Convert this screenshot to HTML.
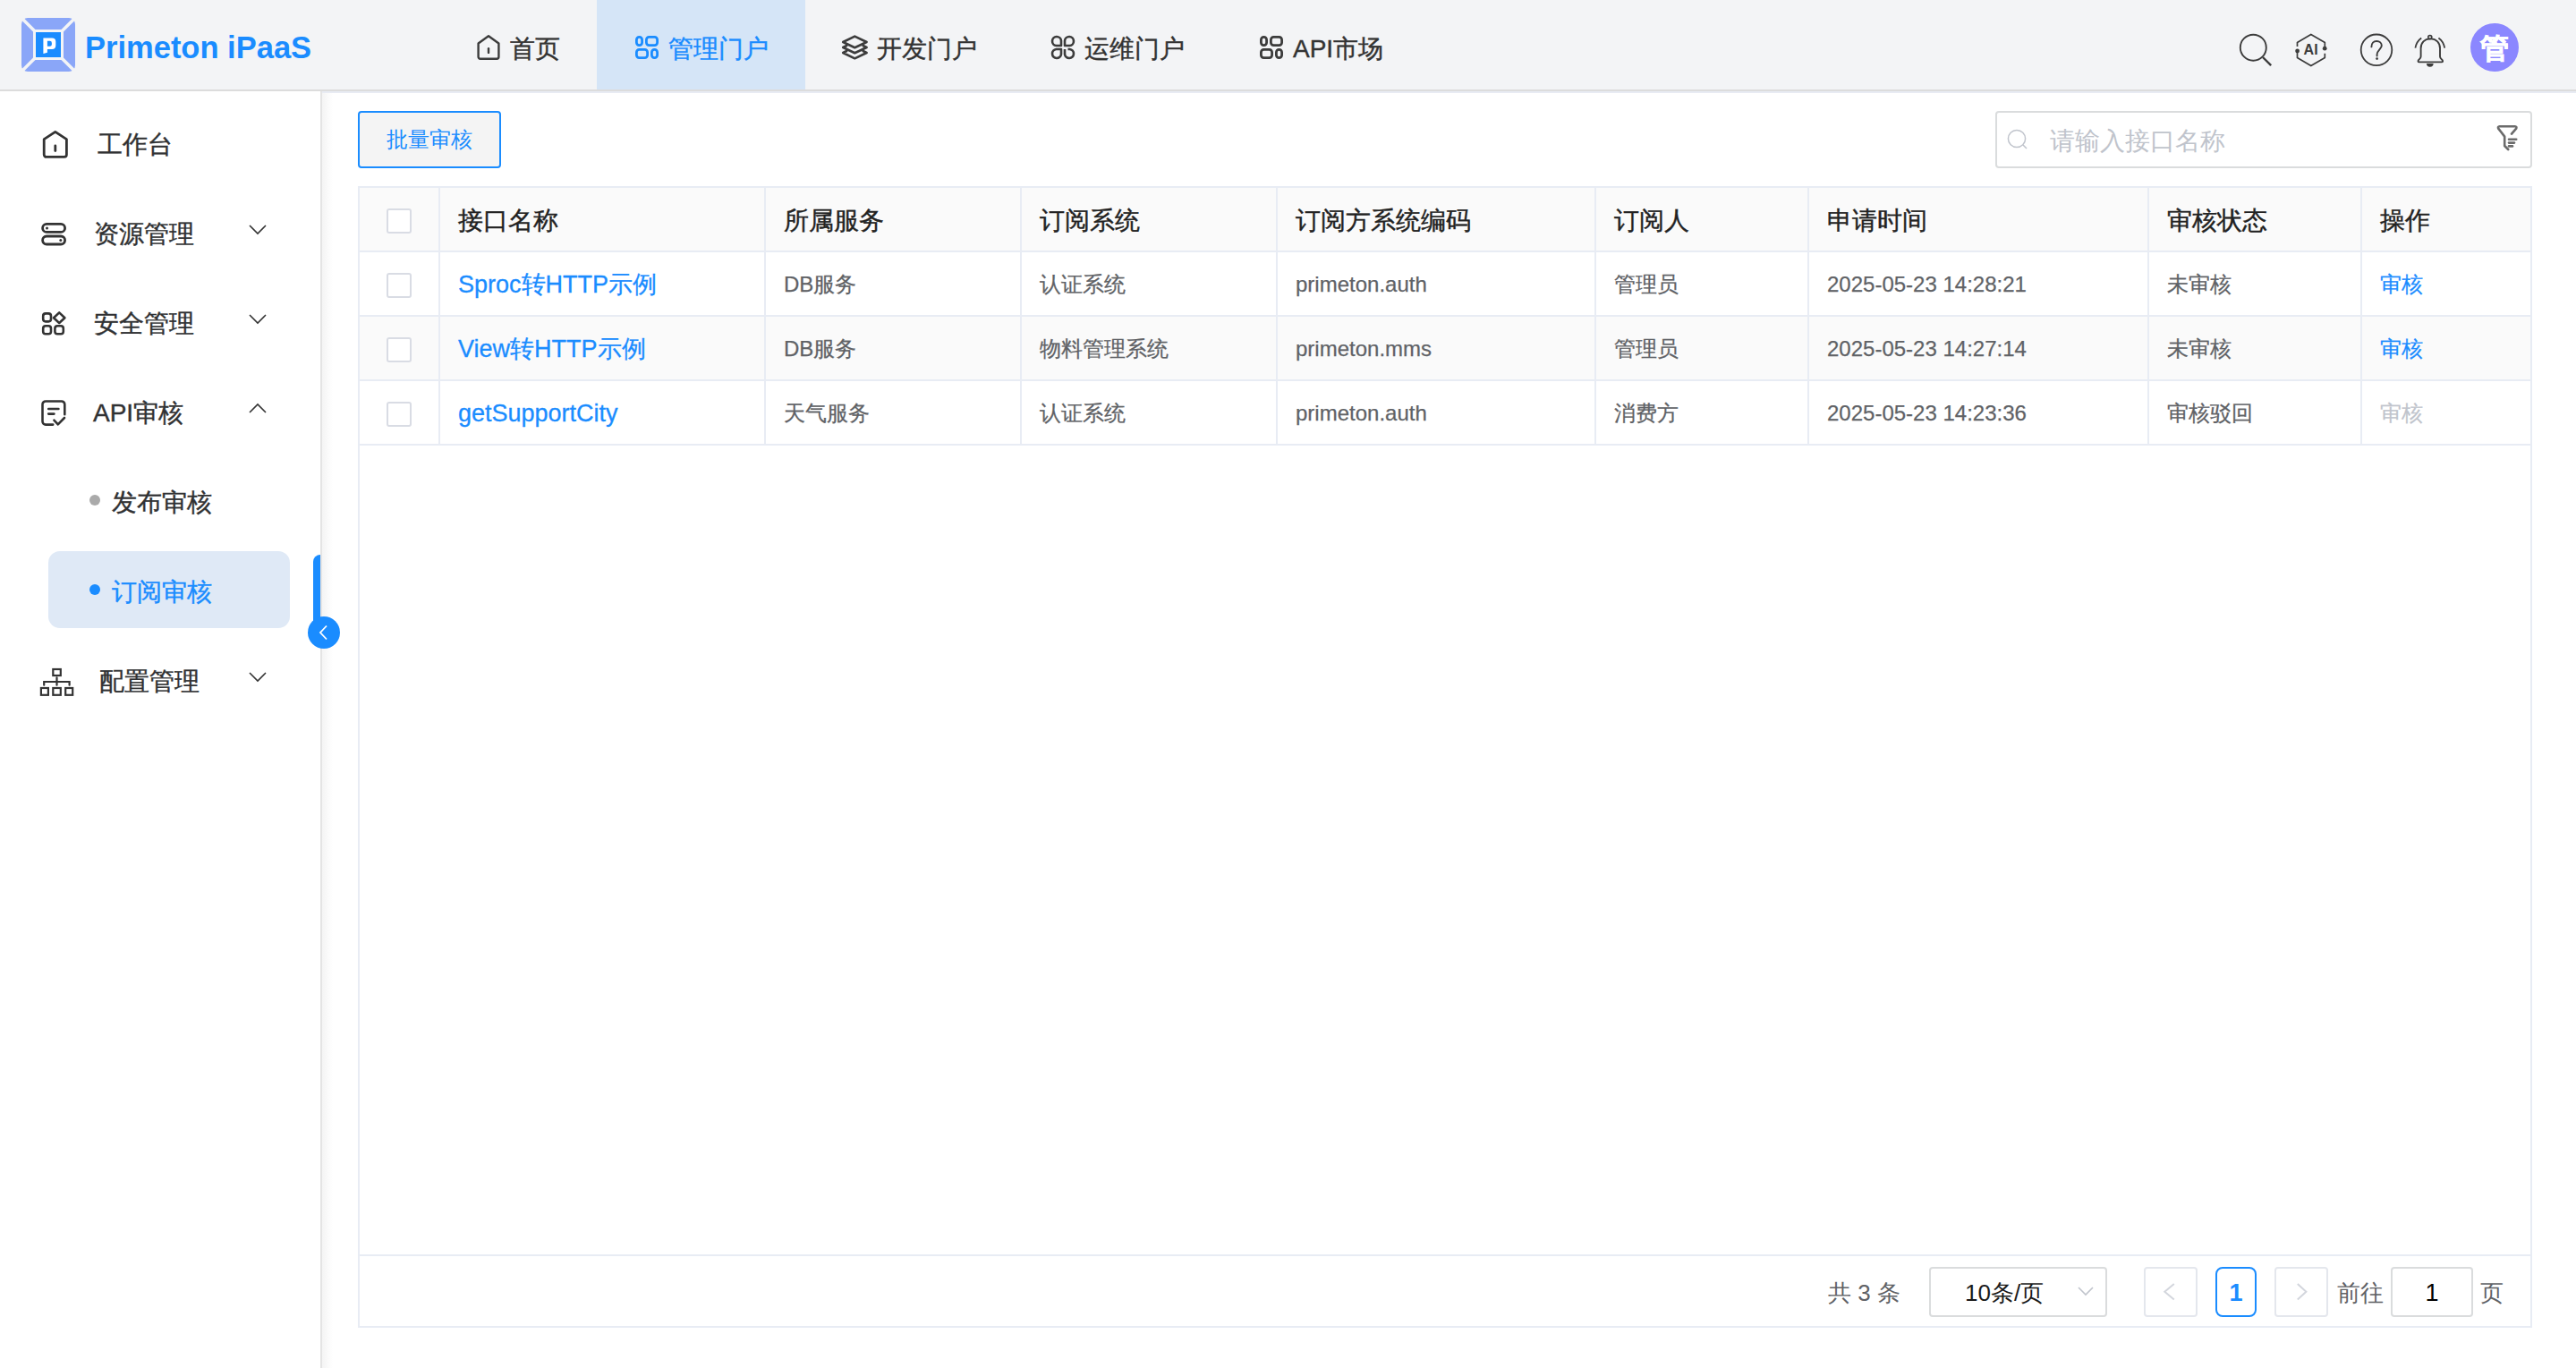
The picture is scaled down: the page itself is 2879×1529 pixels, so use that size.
<!DOCTYPE html>
<html><head><meta charset="utf-8">
<style>
*{box-sizing:border-box;margin:0;padding:0}
html,body{width:2879px;height:1529px;overflow:hidden;background:#fff;font-family:"Liberation Sans",sans-serif;color:#333}
.abs{position:absolute}
.t{position:absolute;white-space:nowrap}
#hdr{position:absolute;left:0;top:0;width:2879px;height:100px;background:#f3f4f6}
#hdrline{position:absolute;left:0;top:100px;width:2879px;height:2px;background:#dcdcdc}
.nav{font-size:28px;line-height:40px;color:#333;margin-top:1px;-webkit-text-stroke:0.4px}
.side{font-size:28px;line-height:40px;color:#303133;margin-top:1px;-webkit-text-stroke:0.4px}
svg{position:absolute;overflow:visible}
.th{font-size:28px;line-height:40px;color:#222;-webkit-text-stroke:0.4px}
.td{font-size:24px;line-height:40px;color:#606266;margin-top:-1px;-webkit-text-stroke:0.25px}
.lk{font-size:27px;line-height:40px;color:#1a8cff;margin-top:-1px;-webkit-text-stroke:0.3px}
.hl{position:absolute;background:#e8ecf4}
.cb{position:absolute;width:28px;height:28px;border:2px solid #d9dce4;border-radius:3px;background:#fff}
</style></head><body>
<!-- HEADER -->
<div id="hdr"></div>
<div id="hdrline"></div>
<!-- logo -->
<svg style="left:24px;top:20px" width="60" height="60" viewBox="0 0 60 60">
  <rect x="0" y="0" width="60" height="60" rx="7" fill="#8aa6f8"/>
  <rect x="13" y="13" width="34" height="34" fill="#f3f4f6"/>
  <g stroke="#f3f4f6" stroke-width="3.6">
    <line x1="-1" y1="-1" x2="16" y2="16"/><line x1="61" y1="-1" x2="44" y2="16"/>
    <line x1="-1" y1="61" x2="16" y2="44"/><line x1="61" y1="61" x2="44" y2="44"/>
  </g>
  <rect x="16" y="16" width="28" height="28" fill="#1a8cff"/>
  <path fill-rule="evenodd" d="M24.4 22.4 H34.1 Q38.3 22.4 38.3 26.6 V30.7 Q38.3 34.9 34.1 34.9 H28.9 V38.8 L24.4 39.9 Z M28.9 25.7 V31.7 H31.7 Q33.9 31.7 33.9 29.5 V27.9 Q33.9 25.7 31.7 25.7 Z" fill="#fff"/>
</svg>
<div class="t" style="left:95px;top:29px;font-size:34.5px;line-height:48px;font-weight:bold;color:#1a8cff">Primeton iPaaS</div>

<!-- nav -->
<div class="abs" style="left:667px;top:0;width:233px;height:100px;background:#d5e5f7"></div>
<!-- home icon -->
<svg style="left:533px;top:39px" width="26" height="28" viewBox="0 0 26 28">
  <path d="M1.6 9.5 L13 1.3 L24.4 9.5 V24.5 a2.2 2.2 0 0 1 -2.2 2.2 H3.8 a2.2 2.2 0 0 1 -2.2 -2.2 Z" fill="none" stroke="#3c3c3c" stroke-width="2.4" stroke-linejoin="round"/>
  <line x1="13" y1="15.3" x2="13" y2="19.9" stroke="#3c3c3c" stroke-width="2.4" stroke-linecap="round"/>
</svg>
<div class="t nav" style="left:570px;top:34px">首页</div>
<!-- grid icon active -->
<svg style="left:709px;top:39px" width="28" height="28" viewBox="0 0 28 28">
  <g fill="none" stroke="#1a8cff" stroke-width="2.8">
    <rect x="2.4" y="2.4" width="6.2" height="9.2" rx="3"/>
    <rect x="13.4" y="2.4" width="12.2" height="9.2" rx="3"/>
    <rect x="2.4" y="16.4" width="12.2" height="9.2" rx="3"/>
    <rect x="19.4" y="16.4" width="6.2" height="9.2" rx="3"/>
  </g>
</svg>
<div class="t nav" style="left:747px;top:34px;color:#1a8cff">管理门户</div>
<!-- layers icon -->
<svg style="left:941px;top:39px" width="30" height="28" viewBox="0 0 30 28">
  <g fill="none" stroke="#3c3c3c" stroke-width="2.6" stroke-linejoin="round" stroke-linecap="round">
    <path d="M14.3 1.6 L27.6 8 L14.3 14.2 L1.2 8 Z"/>
    <path d="M1.2 14 L14.3 20.2 L27.6 14 M1.2 14 L5.2 12 M27.6 14 L23.6 12"/>
    <path d="M1.2 20 L14.3 26.3 L27.6 20 M1.2 20 L5.2 18 M27.6 20 L23.6 18"/>
  </g>
</svg>
<div class="t nav" style="left:980px;top:34px">开发门户</div>
<!-- ops icon -->
<svg style="left:1174px;top:39px" width="28" height="28" viewBox="0 0 28 28">
  <g fill="none" stroke="#3c3c3c" stroke-width="2.6" stroke-linejoin="round">
    <path d="M12 12 H6.5 A5 5 0 1 1 12 6.5 Z"/>
    <path d="M16 12 V6.5 A5 5 0 1 1 21.5 12 Z"/>
    <path d="M12 16 V21.5 A5 5 0 1 1 6.5 16 Z"/>
    <path d="M16 16 V21.5 A5 5 0 1 0 21.5 16 H19.5"/>
  </g>
</svg>
<div class="t nav" style="left:1212px;top:34px">运维门户</div>
<!-- api grid -->
<svg style="left:1407px;top:39px" width="28" height="28" viewBox="0 0 28 28">
  <g fill="none" stroke="#3c3c3c" stroke-width="2.8">
    <rect x="2.4" y="2.4" width="6.2" height="9.2" rx="3"/>
    <rect x="13.4" y="2.4" width="12.2" height="9.2" rx="3"/>
    <rect x="2.4" y="16.4" width="12.2" height="9.2" rx="3"/>
    <rect x="19.4" y="16.4" width="6.2" height="9.2" rx="3"/>
  </g>
</svg>
<div class="t nav" style="left:1445px;top:34px">API市场</div>

<!-- right icons -->
<svg style="left:2500px;top:35px" width="44" height="44" viewBox="0 0 44 44">
  <circle cx="18.3" cy="18.2" r="14.5" fill="none" stroke="#3c3c3c" stroke-width="1.9"/>
  <line x1="29" y1="29" x2="38.2" y2="38.2" stroke="#3c3c3c" stroke-width="2.4"/>
</svg>
<svg style="left:2560px;top:35px" width="44" height="44" viewBox="0 0 44 44">
  <path d="M7.5 17 V12.4 L22.8 3.4 L38.3 12.4 V18.5" fill="none" stroke="#3c3c3c" stroke-width="1.7" stroke-linejoin="round"/>
  <path d="M7.5 22.5 V29.6 L22.8 38.6 L38.3 29.6 V24.8" fill="none" stroke="#3c3c3c" stroke-width="1.7" stroke-linejoin="round"/>
  <circle cx="7.6" cy="22" r="2.4" fill="#3c3c3c"/>
  <circle cx="38.2" cy="19.2" r="2.4" fill="#3c3c3c"/>
  <text x="22.6" y="25.8" text-anchor="middle" font-family="Liberation Sans" font-weight="bold" font-size="16" fill="#3c3c3c">AI</text>
</svg>
<svg style="left:2630px;top:35px" width="44" height="44" viewBox="0 0 44 44">
  <circle cx="26" cy="20.8" r="17.3" fill="none" stroke="#3c3c3c" stroke-width="1.8"/>
  <path d="M20.4 17.4 c0 -4 2.4 -6.4 5.8 -6.4 c3.4 0 5.6 2.2 5.6 5 c0 3.6 -5.2 5.4 -5.2 9.8 v1.8" fill="none" stroke="#3c3c3c" stroke-width="1.9" stroke-linecap="round"/>
  <circle cx="26.6" cy="30.6" r="1.4" fill="#3c3c3c"/>
</svg>
<svg style="left:2695px;top:35px" width="44" height="44" viewBox="0 0 44 44">
  <path d="M20.8 8.4 c-6 0 -10.2 4.6 -10.2 10.6 v9.2 c0 1.6 -0.8 2.4 -2 3.4 c-1.4 1.1 -1.6 2.8 0.4 2.8 H33.6 c2 0 1.8 -1.7 0.4 -2.8 c-1.2 -1 -2 -1.8 -2 -3.4 v-9.2 c0 -6 -4.2 -10.6 -10.2 -10.6 Z" fill="none" stroke="#3c3c3c" stroke-width="1.9" stroke-linejoin="round"/>
  <circle cx="20.8" cy="6.6" r="2" fill="none" stroke="#3c3c3c" stroke-width="1.6"/>
  <path d="M17 36 a3.8 3.8 0 0 0 7.6 0 Z" fill="#3c3c3c"/>
  <path d="M4.4 18.6 c0.8 -4.6 3 -8.6 6.8 -11.2" fill="none" stroke="#3c3c3c" stroke-width="1.8"/>
  <path d="M37.2 18.6 c-0.8 -4.6 -3 -8.6 -6.8 -11.2" fill="none" stroke="#3c3c3c" stroke-width="1.8"/>
</svg>
<div class="abs" style="left:2761px;top:26px;width:54px;height:54px;border-radius:50%;background:#8b87ff"></div>
<div class="t" style="left:2761px;top:27px;width:54px;text-align:center;font-size:32px;line-height:54px;font-weight:bold;color:#fff;-webkit-text-stroke:0.7px #fff">管</div>

<!-- SIDEBAR -->
<div class="abs" style="left:358px;top:102px;width:2px;height:1427px;background:#e4e4e4"></div>
<div class="abs" style="left:360px;top:102px;width:2519px;height:2px;background:#e8ebf3"></div>
<div class="abs" style="left:360px;top:104px;width:12px;height:1425px;background:linear-gradient(to right,#f4f4f4,#fff)"></div>

<!-- 工作台 -->
<svg style="left:46px;top:144px" width="32" height="34" viewBox="0 0 32 34">
  <path d="M3.2 11.6 L15.8 3.4 L28.4 11.6 V28.8 a2.6 2.6 0 0 1 -2.6 2.6 H5.8 a2.6 2.6 0 0 1 -2.6 -2.6 Z" fill="none" stroke="#333" stroke-width="2.8" stroke-linejoin="round"/>
  <line x1="15.8" y1="18.8" x2="15.8" y2="24.6" stroke="#333" stroke-width="2.8" stroke-linecap="round"/>
</svg>
<div class="t side" style="left:109px;top:141px">工作台</div>
<!-- 资源管理 -->
<svg style="left:45px;top:248px" width="30" height="28" viewBox="0 0 30 28">
  <g fill="none" stroke="#333" stroke-width="2.8">
    <rect x="2.6" y="2.4" width="25" height="9" rx="4.5"/>
    <rect x="2.6" y="16" width="25" height="9" rx="4.5"/>
  </g>
  <circle cx="7.5" cy="7" r="1.5" fill="#333"/><circle cx="22.8" cy="20.6" r="1.5" fill="#333"/>
</svg>
<div class="t side" style="left:105px;top:241px">资源管理</div>
<!-- 安全管理 -->
<svg style="left:45px;top:347px" width="30" height="30" viewBox="0 0 30 30">
  <g fill="none" stroke="#333" stroke-width="2.6" stroke-linejoin="round">
    <rect x="3.2" y="3.4" width="8.8" height="9" rx="2.8"/>
    <path d="M21.2 2.4 L27.4 8.2 L21.2 14 L15 8.2 Z"/>
    <rect x="3.2" y="17.2" width="8.8" height="9" rx="2.8"/>
    <rect x="16.4" y="17.2" width="9.4" height="9" rx="2.8"/>
  </g>
</svg>
<div class="t side" style="left:105px;top:341px">安全管理</div>
<!-- API审核 -->
<svg style="left:46px;top:447px" width="30" height="30" viewBox="0 0 30 30">
  <g fill="none" stroke="#333" stroke-width="2.6" stroke-linecap="round" stroke-linejoin="round">
    <path d="M13.2 27.6 H5 a3.5 3.5 0 0 1 -3.5 -3.5 V5 a3.5 3.5 0 0 1 3.5 -3.5 H22.8 a3.5 3.5 0 0 1 3.5 3.5 V16.2"/>
    <line x1="8.2" y1="10" x2="19.4" y2="10"/>
    <line x1="8.2" y1="15.6" x2="14.4" y2="15.6"/>
    <path d="M14.4 22.6 L18.8 27.4 L26 20"/>
  </g>
</svg>
<div class="t side" style="left:104px;top:441px">API审核</div>
<!-- chevrons -->
<svg style="left:278px;top:250px" width="20" height="14" viewBox="0 0 20 14"><path d="M1 2 L10 11 L19 2" fill="none" stroke="#333" stroke-width="1.6"/></svg>
<svg style="left:278px;top:350px" width="20" height="14" viewBox="0 0 20 14"><path d="M1 2 L10 11 L19 2" fill="none" stroke="#333" stroke-width="1.6"/></svg>
<svg style="left:278px;top:450px" width="20" height="14" viewBox="0 0 20 14"><path d="M1 11 L10 2 L19 11" fill="none" stroke="#333" stroke-width="1.6"/></svg>
<svg style="left:278px;top:750px" width="20" height="14" viewBox="0 0 20 14"><path d="M1 2 L10 11 L19 2" fill="none" stroke="#333" stroke-width="1.6"/></svg>
<!-- sub items -->
<div class="abs" style="left:100px;top:553px;width:12px;height:12px;border-radius:50%;background:#aaa"></div>
<div class="t side" style="left:125px;top:541px">发布审核</div>
<div class="abs" style="left:54px;top:616px;width:270px;height:86px;border-radius:13px;background:#dfe9f6"></div>
<div class="abs" style="left:100px;top:653px;width:12px;height:12px;border-radius:50%;background:#1a8cff"></div>
<div class="t side" style="left:125px;top:641px;color:#1a8cff">订阅审核</div>
<!-- 配置管理 -->
<svg style="left:43px;top:745px" width="40" height="34" viewBox="0 0 40 34">
  <g fill="none" stroke="#333" stroke-width="2.2">
    <rect x="16.3" y="3" width="8.5" height="7"/>
    <rect x="2.9" y="24" width="8" height="7.8"/>
    <rect x="16.3" y="24" width="8.5" height="7.8"/>
    <rect x="30.2" y="24" width="8" height="7.8"/>
    <path d="M20.5 12.3 V20.7 M6.2 20.7 V17 H34.6 V20.7" stroke-linecap="round"/>
  </g>
</svg>
<div class="t side" style="left:111px;top:741px">配置管理</div>
<!-- scrollbar + collapse -->
<div class="abs" style="left:350px;top:620px;width:8px;height:90px;border-radius:8px 0 0 0;background:#1a8cff"></div>
<div class="abs" style="left:344px;top:689px;width:36px;height:36px;border-radius:50%;background:#1a8cff"></div>
<svg style="left:344px;top:689px" width="36" height="36" viewBox="0 0 36 36"><path d="M21 10.5 L14 18 L21 25.5" fill="none" stroke="#fff" stroke-width="1.8"/></svg>

<!-- TOOLBAR -->
<div class="abs" style="left:400px;top:124px;width:160px;height:64px;border:2px solid #1a8cff;border-radius:4px;background:#f4f4f4"></div>
<div class="t" style="left:400px;top:136px;width:160px;text-align:center;font-size:24px;line-height:40px;color:#1a8cff">批量审核</div>

<div class="abs" style="left:2230px;top:124px;width:600px;height:64px;border:2px solid #dadcdd;border-radius:4px;background:#fff"></div>
<svg style="left:2240px;top:140px" width="30" height="30" viewBox="0 0 30 30">
  <circle cx="14" cy="15" r="9.6" fill="none" stroke="#c0c4cc" stroke-width="1.5"/>
  <line x1="21" y1="22" x2="25" y2="26" stroke="#c0c4cc" stroke-width="1.6"/>
</svg>
<div class="t" style="left:2291px;top:138px;font-size:28px;line-height:40px;color:#c0c4cc">请输入接口名称</div>
<svg style="left:2786px;top:136px" width="32" height="36" viewBox="0 0 32 36">
  <g fill="none" stroke="#6b6b6b" stroke-width="2.6" stroke-linecap="round" stroke-linejoin="round">
    <path d="M17.2 31 L13.2 27 V16.6 L6.2 7.6 Q5.4 5.4 7.6 5.2 H24.8 Q27 5.4 26.2 7.6 L21 13.6"/>
    <line x1="18" y1="19.8" x2="26.2" y2="19.8"/>
    <line x1="18" y1="23.6" x2="24" y2="23.6"/>
    <line x1="18" y1="27.4" x2="22" y2="27.4"/>
  </g>
</svg>

<!-- TABLE -->
<div class="abs" style="left:400px;top:208px;width:2430px;height:1276px;border:2px solid #e8ecf4;background:#fff"></div>
<div class="abs" style="left:402px;top:210px;width:2426px;height:70px;background:#fafafa"></div>
<div class="abs" style="left:402px;top:354px;width:2426px;height:70px;background:#fafafa"></div>
<div class="hl" style="left:402px;top:280px;width:2426px;height:2px"></div>
<div class="hl" style="left:402px;top:352px;width:2426px;height:2px"></div>
<div class="hl" style="left:402px;top:424px;width:2426px;height:2px"></div>
<div class="hl" style="left:402px;top:496px;width:2426px;height:2px"></div>
<div class="hl" style="left:402px;top:1402px;width:2426px;height:2px"></div>
<div class="hl" style="left:490px;top:210px;width:2px;height:286px"></div>
<div class="hl" style="left:854px;top:210px;width:2px;height:286px"></div>
<div class="hl" style="left:1140px;top:210px;width:2px;height:286px"></div>
<div class="hl" style="left:1426px;top:210px;width:2px;height:286px"></div>
<div class="hl" style="left:1782px;top:210px;width:2px;height:286px"></div>
<div class="hl" style="left:2020px;top:210px;width:2px;height:286px"></div>
<div class="hl" style="left:2400px;top:210px;width:2px;height:286px"></div>
<div class="hl" style="left:2638px;top:210px;width:2px;height:286px"></div>

<div class="cb" style="left:432px;top:233px"></div>
<div class="cb" style="left:432px;top:305px"></div>
<div class="cb" style="left:432px;top:377px"></div>
<div class="cb" style="left:432px;top:449px"></div>

<div class="t th" style="left:512px;top:227px">接口名称</div>
<div class="t th" style="left:876px;top:227px">所属服务</div>
<div class="t th" style="left:1162px;top:227px">订阅系统</div>
<div class="t th" style="left:1448px;top:227px">订阅方系统编码</div>
<div class="t th" style="left:1804px;top:227px">订阅人</div>
<div class="t th" style="left:2042px;top:227px">申请时间</div>
<div class="t th" style="left:2422px;top:227px">审核状态</div>
<div class="t th" style="left:2660px;top:227px">操作</div>

<div class="t lk" style="left:512px;top:299px">Sproc转HTTP示例</div>
<div class="t td" style="left:876px;top:299px">DB服务</div>
<div class="t td" style="left:1162px;top:299px">认证系统</div>
<div class="t td" style="left:1448px;top:299px">primeton.auth</div>
<div class="t td" style="left:1804px;top:299px">管理员</div>
<div class="t td" style="left:2042px;top:299px">2025-05-23 14:28:21</div>
<div class="t td" style="left:2422px;top:299px">未审核</div>
<div class="t td" style="left:2660px;top:299px;color:#1a8cff">审核</div>

<div class="t lk" style="left:512px;top:371px">View转HTTP示例</div>
<div class="t td" style="left:876px;top:371px">DB服务</div>
<div class="t td" style="left:1162px;top:371px">物料管理系统</div>
<div class="t td" style="left:1448px;top:371px">primeton.mms</div>
<div class="t td" style="left:1804px;top:371px">管理员</div>
<div class="t td" style="left:2042px;top:371px">2025-05-23 14:27:14</div>
<div class="t td" style="left:2422px;top:371px">未审核</div>
<div class="t td" style="left:2660px;top:371px;color:#1a8cff">审核</div>

<div class="t lk" style="left:512px;top:443px">getSupportCity</div>
<div class="t td" style="left:876px;top:443px">天气服务</div>
<div class="t td" style="left:1162px;top:443px">认证系统</div>
<div class="t td" style="left:1448px;top:443px">primeton.auth</div>
<div class="t td" style="left:1804px;top:443px">消费方</div>
<div class="t td" style="left:2042px;top:443px">2025-05-23 14:23:36</div>
<div class="t td" style="left:2422px;top:443px">审核驳回</div>
<div class="t td" style="left:2660px;top:443px;color:#c0c4cc">审核</div>

<!-- PAGINATION -->
<div class="t" style="left:2043px;top:1425px;font-size:26px;line-height:40px;color:#606266">共 3 条</div>
<div class="abs" style="left:2156px;top:1416px;width:199px;height:56px;border:2px solid #dadcdd;border-radius:4px;background:#fff"></div>
<div class="t" style="left:2196px;top:1425px;font-size:26px;line-height:40px;color:#1a1a1a">10条/页</div>
<svg style="left:2320px;top:1434px" width="22" height="18" viewBox="0 0 22 18"><path d="M3 5 L11 13 L19 5" fill="none" stroke="#c0c4cc" stroke-width="1.6"/></svg>
<div class="abs" style="left:2396px;top:1416px;width:60px;height:56px;border:2px solid #e4e7ed;border-radius:4px;background:#fff"></div>
<svg style="left:2396px;top:1416px" width="60" height="56" viewBox="0 0 60 56"><path d="M33.8 19 L23.3 27.8 L33.8 36.5" fill="none" stroke="#d3d6dd" stroke-width="2"/></svg>
<div class="abs" style="left:2476px;top:1416px;width:46px;height:56px;border:2px solid #1a8cff;border-radius:8px;background:#fff"></div>
<div class="t" style="left:2476px;top:1425px;width:46px;text-align:center;font-size:27px;line-height:40px;font-weight:bold;color:#1a8cff">1</div>
<div class="abs" style="left:2542px;top:1416px;width:60px;height:56px;border:2px solid #e4e7ed;border-radius:4px;background:#fff"></div>
<svg style="left:2542px;top:1416px" width="60" height="56" viewBox="0 0 60 56"><path d="M25.8 19 L35.4 27.8 L25.8 36.5" fill="none" stroke="#d3d6dd" stroke-width="2"/></svg>
<div class="t" style="left:2612px;top:1425px;font-size:26px;line-height:40px;color:#606266">前往</div>
<div class="abs" style="left:2672px;top:1416px;width:92px;height:56px;border:2px solid #dadcdd;border-radius:4px;background:#fff"></div>
<div class="t" style="left:2672px;top:1425px;width:92px;text-align:center;font-size:27px;line-height:40px;color:#000">1</div>
<div class="t" style="left:2772px;top:1425px;font-size:26px;line-height:40px;color:#606266">页</div>
</body></html>
